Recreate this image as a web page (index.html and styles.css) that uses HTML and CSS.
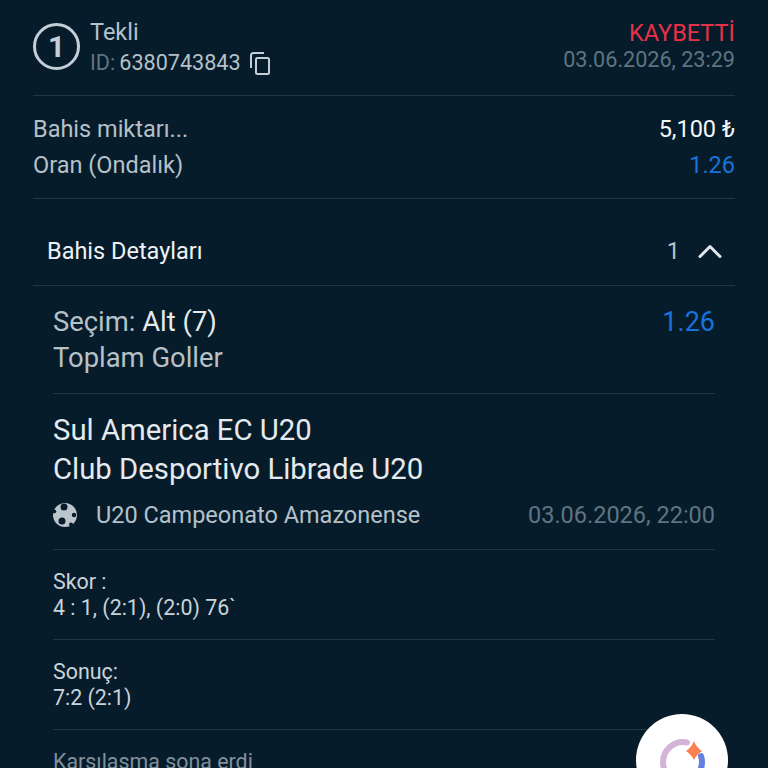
FILE: index.html
```html
<!DOCTYPE html>
<html lang="en">
<head>
    <meta charset="UTF-8">
    <title>Bahis Detayları</title>
    <link rel="stylesheet" href="styles.css">
</head>
<body>
    <div class="page">
        <!-- ticket header -->
        <div class="head">
            <div class="count">1</div>
            <div class="head-info">
                <div class="type">Tekli</div>
                <div class="ticket-id">ID: <span class="id-num">6380743843</span>
                    <svg class="copy" width="20" height="23" viewBox="0 0 20 23" fill="none" stroke="#c3ced6" stroke-width="2">
                        <path d="M1 16V3.500C1 2 2 1 3.500 1H14"/>
                        <rect x="6" y="6" width="13" height="16" rx="1.500"/>
                    </svg>
                </div>
            </div>
            <div class="head-right">
                <div class="status">KAYBETTİ</div>
                <div class="date">03.06.2026, 23:29</div>
            </div>
        </div>

        <div class="summary">
            <div class="row"><span>Bahis miktarı...</span><span class="amount">5,100 ₺</span></div>
            <div class="row"><span>Oran (Ondalık)</span><span class="blue">1.26</span></div>
        </div>

        <div class="details-bar">
            <span>Bahis Detayları</span>
            <div class="bar-right">
                <span class="bar-num">1</span>
                <svg width="24" height="14" viewBox="0 0 24 14" fill="none" stroke="#dfe7ec" stroke-width="3" stroke-linecap="round" stroke-linejoin="round">
                    <path d="M2 12.500L12 2.500L22 12.500"/>
                </svg>
            </div>
        </div>

        <!-- selection -->
        <div class="details">
            <div class="selection">
                <div class="sel-text">
                    <div>Seçim: <span class="light">Alt (7)</span></div>
                    <div>Toplam Goller</div>
                </div>
                <div class="blue sel-odd">1.26</div>
            </div>

            <div class="match">
                <div class="teams">Sul America EC U20</div>
                <div class="teams">Club Desportivo Librade U20</div>
                <div class="league">
                    <svg class="ball" width="24" height="24" viewBox="0 0 24 24">
                        <circle cx="12" cy="12" r="12" fill="#bcc5cc"/>
                        <circle cx="11" cy="4" r="3.500" fill="#071c2b"/>
                        <circle cx="21" cy="12" r="2.200" fill="#071c2b"/>
                        <circle cx="9" cy="18" r="3.500" fill="#071c2b"/>
                        <circle cx="18" cy="21.500" r="2" fill="#071c2b"/>
                        <circle cx="1.500" cy="8.500" r="1.800" fill="#071c2b"/>
                    </svg>
                    <span class="league-name">U20 Campeonato Amazonense</span>
                    <span class="league-date">03.06.2026, 22:00</span>
                </div>
            </div>

            <div class="score">
                <div>Skor :</div>
                <div>4 : 1, (2:1), (2:0) 76`</div>
            </div>
            <div class="score">
                <div>Sonuç:</div>
                <div>7:2 (2:1)</div>
            </div>
            <div class="score end">Karşılaşma sona erdi</div>
        </div>

        <div class="fab">
            <svg width="56" height="56" viewBox="0 0 56 56" fill="none">
                <path d="M33 10.500A20 20 0 0 0 9 30A20 20 0 0 0 29 50" stroke="#d3b4d6" stroke-width="6" stroke-linecap="round"/>
                <path d="M47 24A20 20 0 0 1 29 50" stroke="#6480e0" stroke-width="6" stroke-linecap="round"/>
                <path d="M40 9C42 14 44 16 48 19C44 22 42 24 40 28C38 24 36 22 32 19C36 16 38 14 40 9Z" fill="#f98150"/>
            </svg>
        </div>
    </div>
</body>
</html>
```

FILE: styles.css
```css
html, body {
    margin: 0;
    padding: 0;
}
body {
    background-color: #071c2b;
    font-family: Roboto, "Liberation Sans", sans-serif;
    color: #b5c1c9;
}
.page {
    position: relative;
    width: 768px;
    height: 768px;
    overflow: hidden;
    box-sizing: border-box;
    padding: 0 33px;
}
.head {
    display: flex;
    align-items: flex-start;
    height: 96px;
    box-sizing: border-box;
    padding-top: 15px;
    border-bottom: 1px solid #1f3644;
}
.count {
    width: 41px;
    height: 41px;
    margin-top: 8px;
    border: 3px solid #c3ced6;
    border-radius: 50%;
    display: flex;
    align-items: center;
    justify-content: center;
    font-size: 30px;
    font-weight: 700;
    color: #c3ced6;
}
.head-info {
    margin-left: 10px;
    padding-top: 2px;
    flex: 1;
    font-size: 23.500px;
    line-height: 31px;
}
.ticket-id {
    display: flex;
    align-items: center;
    gap: 4px;
    color: #5f7482;
    font-size: 21.600px;
    line-height: 30px;
}
.id-num {
    color: #b5c1c9;
}
.copy {
    margin-left: 5px;
    margin-top: 1px;
}
.head-right {
    text-align: right;
    padding-top: 3px;
}
.status {
    color: #e6314a;
    font-size: 23.500px;
    line-height: 30px;
}
.date {
    color: #5f7482;
    font-size: 21.600px;
    line-height: 24px;
}
.summary {
    height: 103px;
    box-sizing: border-box;
    padding-top: 15px;
    border-bottom: 1px solid #1f3644;
    font-size: 23.500px;
    line-height: 36px;
}
.row {
    display: flex;
    justify-content: space-between;
}
.amount {
    color: #f4f7f9;
}
.blue {
    color: #1673dc;
}
.details-bar {
    display: flex;
    justify-content: space-between;
    align-items: center;
    height: 87px;
    box-sizing: border-box;
    padding: 18px 13px 0 14px;
    border-bottom: 1px solid #1f3644;
    font-size: 23.500px;
    color: #eef2f5;
}
.bar-right {
    display: flex;
    align-items: center;
    gap: 18px;
}
.bar-num {
    color: #b5c1c9;
}
.details {
    padding: 0 20px;
}
.selection {
    display: flex;
    justify-content: space-between;
    height: 108px;
    box-sizing: border-box;
    padding-top: 18px;
    border-bottom: 1px solid #1f3644;
    font-size: 27.400px;
    line-height: 36px;
}
.light {
    color: #e4eaee;
}
.sel-odd {
    font-size: 27px;
}
.match {
    height: 156px;
    box-sizing: border-box;
    padding-top: 17px;
    border-bottom: 1px solid #1f3644;
}
.teams {
    font-size: 29.300px;
    line-height: 39px;
    color: #e4eaee;
}
.league {
    display: flex;
    align-items: center;
    margin-top: 9px;
    font-size: 23.500px;
    line-height: 34px;
}
.ball {
    margin-right: 19px;
    margin-top: -1px;
}
.league-name {
    flex: 1;
}
.league-date {
    color: #5f7482;
}
.score {
    height: 90px;
    box-sizing: border-box;
    padding-top: 19px;
    border-bottom: 1px solid #1f3644;
    font-size: 21.400px;
    line-height: 26px;
    color: #c9d3da;
}
.score.end {
    border-bottom: none;
    color: #7f909c;
}
.fab {
    position: absolute;
    left: 636px;
    top: 714px;
    width: 92px;
    height: 92px;
    border-radius: 50%;
    background-color: #fff;
    display: flex;
    align-items: center;
    justify-content: center;
}
```
